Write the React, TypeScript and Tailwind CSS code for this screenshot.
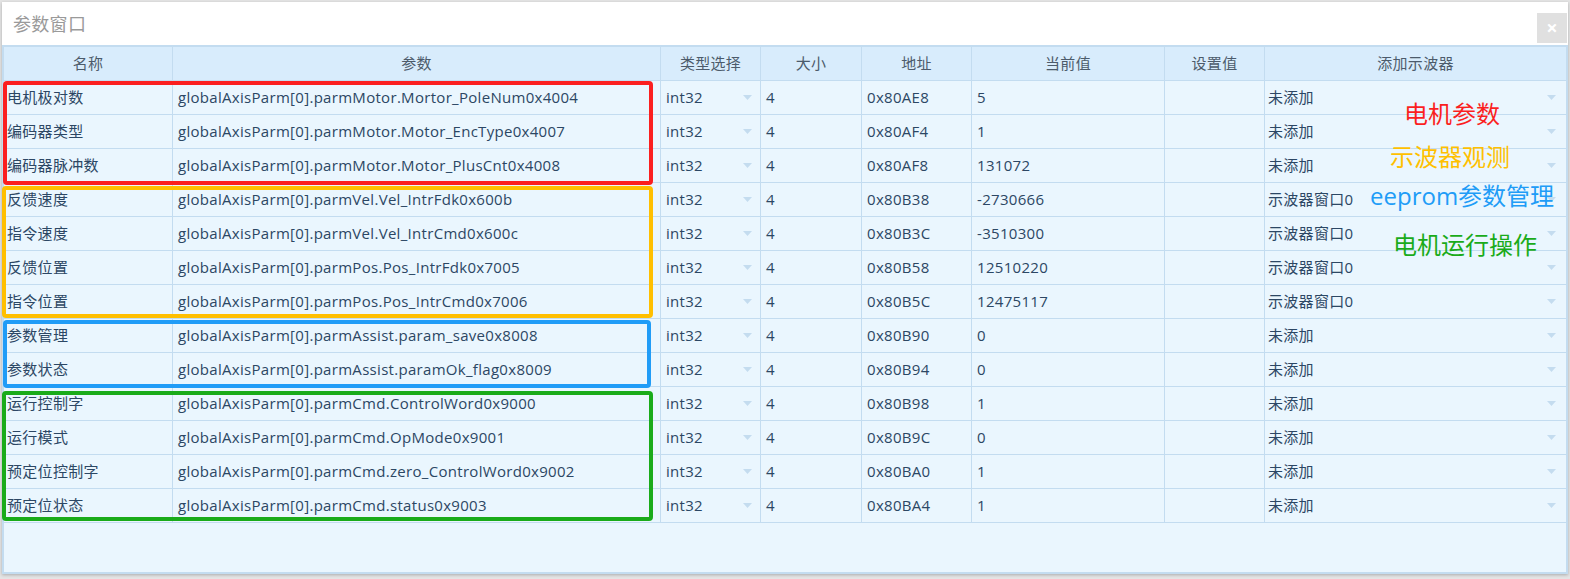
import React from 'react';

const rows = [
  { name: '电机极对数', param: 'globalAxisParm[0].parmMotor.Mortor_PoleNum0x4004', addr: '0x80AE8', cur: '5', scope: '未添加' },
  { name: '编码器类型', param: 'globalAxisParm[0].parmMotor.Motor_EncType0x4007', addr: '0x80AF4', cur: '1', scope: '未添加' },
  { name: '编码器脉冲数', param: 'globalAxisParm[0].parmMotor.Motor_PlusCnt0x4008', addr: '0x80AF8', cur: '131072', scope: '未添加' },
  { name: '反馈速度', param: 'globalAxisParm[0].parmVel.Vel_IntrFdk0x600b', addr: '0x80B38', cur: '-2730666', scope: '示波器窗口0' },
  { name: '指令速度', param: 'globalAxisParm[0].parmVel.Vel_IntrCmd0x600c', addr: '0x80B3C', cur: '-3510300', scope: '示波器窗口0' },
  { name: '反馈位置', param: 'globalAxisParm[0].parmPos.Pos_IntrFdk0x7005', addr: '0x80B58', cur: '12510220', scope: '示波器窗口0' },
  { name: '指令位置', param: 'globalAxisParm[0].parmPos.Pos_IntrCmd0x7006', addr: '0x80B5C', cur: '12475117', scope: '示波器窗口0' },
  { name: '参数管理', param: 'globalAxisParm[0].parmAssist.param_save0x8008', addr: '0x80B90', cur: '0', scope: '未添加' },
  { name: '参数状态', param: 'globalAxisParm[0].parmAssist.paramOk_flag0x8009', addr: '0x80B94', cur: '0', scope: '未添加' },
  { name: '运行控制字', param: 'globalAxisParm[0].parmCmd.ControlWord0x9000', addr: '0x80B98', cur: '1', scope: '未添加' },
  { name: '运行模式', param: 'globalAxisParm[0].parmCmd.OpMode0x9001', addr: '0x80B9C', cur: '0', scope: '未添加' },
  { name: '预定位控制字', param: 'globalAxisParm[0].parmCmd.zero_ControlWord0x9002', addr: '0x80BA0', cur: '1', scope: '未添加' },
  { name: '预定位状态', param: 'globalAxisParm[0].parmCmd.status0x9003', addr: '0x80BA4', cur: '1', scope: '未添加' },
];

const cols = 'grid grid-cols-[169px_488px_100px_101px_110px_193px_100px_301px]';
const font = { fontFamily: '"Open Sans", "Noto Sans CJK SC", sans-serif' };
const cjk = { fontFamily: '"Noto Sans CJK SC", sans-serif' };

function Arrow() {
  return (
    <svg width="9" height="5" viewBox="0 0 9 5" className="shrink-0">
      <path d="M0 0 L9 0 L4.5 5 Z" fill="#c4dcef" />
    </svg>
  );
}

export default function App() {
  return (
    <div className="w-[1570px] h-[579px] bg-[#e4e4e4] relative overflow-hidden" style={font}>
      <div className="absolute left-[2px] top-[2px] w-[1566px] h-[572px] bg-white flex flex-col shadow-[0_1px_3px_rgba(0,0,0,0.25)]">
        {/* Title bar */}
        <div className="h-[43px] flex items-center justify-between pl-[11px] pr-[1px] shrink-0">
          <span className="text-[18px] text-[#9a9a9a] tracking-[0.3px]" style={cjk}>参数窗口</span>
          <div className="w-[30px] h-[30px] bg-[#e0e0e0] flex items-center justify-center mt-[8px]">
            <span className="text-white text-[20px] font-bold leading-none">×</span>
          </div>
        </div>

        {/* Table */}
        <div className="flex-1 flex flex-col border-2 border-[#c3dcf0] bg-[#eaf6fe] text-[15px] tracking-[0.3px] text-[#2c4764]">
          <div className={`${cols} h-[34px] bg-[#d8ecfc] border-b border-[#c3dcf0] text-[#4c5b6b]`}>
            {['名称', '参数', '类型选择', '大小', '地址', '当前值', '设置值', '添加示波器'].map((h) => (
              <div key={h} className="flex items-center justify-center border-r border-[#c3dcf0] last:border-r-0">
                {h}
              </div>
            ))}
          </div>
          {rows.map((r) => (
            <div key={r.name} className={`${cols} h-[34px] border-b border-[#c3dcf0]`}>
              <div className="flex items-center pl-[3px] border-r border-[#c3dcf0]">{r.name}</div>
              <div className="flex items-center pl-[5px] border-r border-[#c3dcf0]">{r.param}</div>
              <div className="flex items-center justify-between pl-[5px] pr-[8px] border-r border-[#c3dcf0]">
                <span>int32</span>
                <Arrow />
              </div>
              <div className="flex items-center pl-[5px] border-r border-[#c3dcf0]">4</div>
              <div className="flex items-center pl-[5px] border-r border-[#c3dcf0]">{r.addr}</div>
              <div className="flex items-center pl-[5px] border-r border-[#c3dcf0]">{r.cur}</div>
              <div className="border-r border-[#c3dcf0]" />
              <div className="flex items-center justify-between pl-[3px] pr-[10px]">
                <span>{r.scope}</span>
                <Arrow />
              </div>
            </div>
          ))}
        </div>
      </div>

      {/* Group outlines */}
      <div className="absolute left-[3px] top-[81px] w-[650px] h-[104px] border-4 border-[#fb1f1f] rounded-[4px]" />
      <div className="absolute left-[2px] top-[186px] w-[651px] h-[132px] border-4 border-[#ffbf00] rounded-[4px]" />
      <div className="absolute left-[3px] top-[320px] w-[648px] h-[68px] border-4 border-[#209cf7] rounded-[4px]" />
      <div className="absolute left-[2px] top-[391px] w-[651px] h-[130px] border-4 border-[#1aab1a] rounded-[4px]" />

      {/* Annotations */}
      <div className="absolute left-[1404px] top-[97px] text-[24px] leading-[32px] text-[#fb1f1f]" style={cjk}>电机参数</div>
      <div className="absolute left-[1390px] top-[140px] text-[24px] leading-[32px] text-[#ffc000]" style={cjk}>示波器观测</div>
      <div className="absolute left-[1370px] top-[180px] text-[24px] leading-[32px] text-[#209cf7]" style={font}>eeprom参数管理</div>
      <div className="absolute left-[1393px] top-[228px] text-[24px] leading-[32px] text-[#1aab1a]" style={cjk}>电机运行操作</div>
    </div>
  );
}
